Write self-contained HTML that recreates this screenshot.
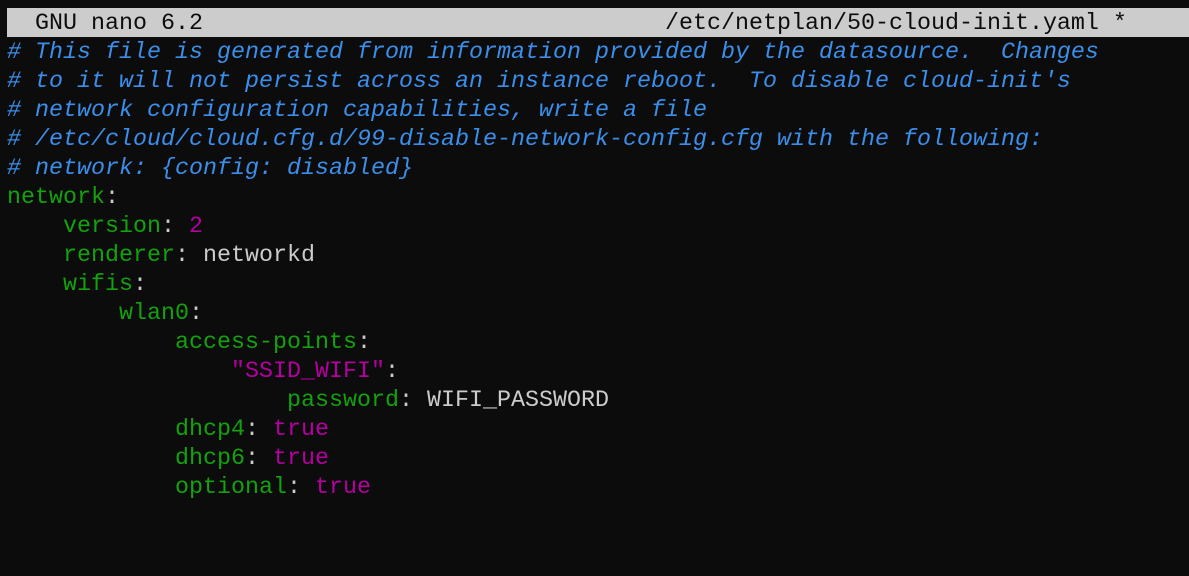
<!DOCTYPE html>
<html><head><style>
html,body{margin:0;padding:0;background:#0c0c0c;width:1189px;height:576px;overflow:hidden}
.barbg{position:absolute;left:7px;top:8px;width:1182px;height:29px;background:#cccccc}
pre{margin:0;position:absolute;left:7px;top:10px;font-family:"Liberation Mono",monospace;font-size:23.33px;line-height:29px;color:#cccccc}
.bar{color:#0c0c0c}
.c{color:#3b8eea;font-style:italic}
.g{color:#13a10e}
.m{color:#b4009e}
</style></head><body>
<div class="barbg"></div>
<pre><span class="bar">  GNU nano 6.2                                 /etc/netplan/50-cloud-init.yaml *</span>
<span class="c"># This file is generated from information provided by the datasource.  Changes
# to it will not persist across an instance reboot.  To disable cloud-init's
# network configuration capabilities, write a file
# /etc/cloud/cloud.cfg.d/99-disable-network-config.cfg with the following:
# network: {config: disabled}</span>
<span class="g">network</span>:
    <span class="g">version</span>: <span class="m">2</span>
    <span class="g">renderer</span>: networkd
    <span class="g">wifis</span>:
        <span class="g">wlan0</span>:
            <span class="g">access-points</span>:
                <span class="m">"SSID_WIFI"</span>:
                    <span class="g">password</span>: WIFI_PASSWORD
            <span class="g">dhcp4</span>: <span class="m">true</span>
            <span class="g">dhcp6</span>: <span class="m">true</span>
            <span class="g">optional</span>: <span class="m">true</span>
</pre>
</body></html>
